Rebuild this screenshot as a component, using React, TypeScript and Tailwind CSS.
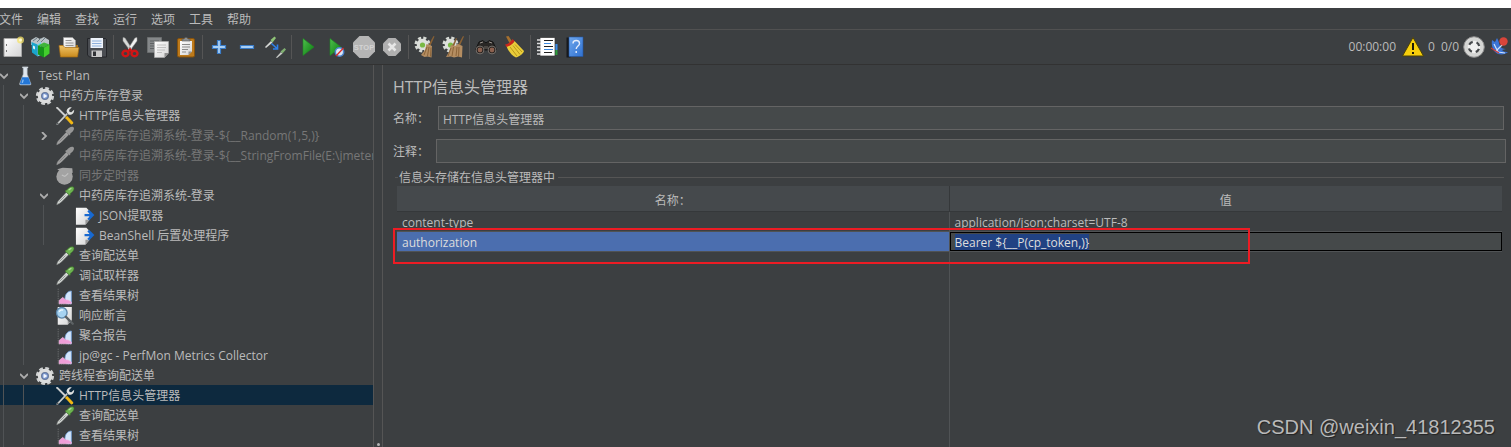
import { useEffect, useRef } from "react";
import type { ReactNode } from "react";

const menus = ["文件", "编辑", "查找", "运行", "选项", "工具", "帮助"];

function Svg({ children, size = "size-[22px]" }: { children: ReactNode; size?: string }) {
  return (
    <svg viewBox="0 0 22 22" className={`${size} shrink-0`} aria-hidden="true">
      {children}
    </svg>
  );
}

/* Gradients shared by all icons */
function IconDefs() {
  return (
    <svg className="absolute size-0" aria-hidden="true">
      <defs>
        <linearGradient id="paper" x1="0" y1="0" x2="1" y2="1">
          <stop offset="0" stopColor="#ffffff" />
          <stop offset="1" stopColor="#d4d4d4" />
        </linearGradient>
        <linearGradient id="folder" x1="0" y1="0" x2="0" y2="1">
          <stop offset="0" stopColor="#f0c468" />
          <stop offset="1" stopColor="#c98a1c" />
        </linearGradient>
        <linearGradient id="play" x1="0" y1="0" x2="1" y2="1">
          <stop offset="0" stopColor="#4fc04c" />
          <stop offset="1" stopColor="#0a7a10" />
        </linearGradient>
        <linearGradient id="blue" x1="0" y1="0" x2="1" y2="1">
          <stop offset="0" stopColor="#6fa8ee" />
          <stop offset="1" stopColor="#2f70cf" />
        </linearGradient>
        <radialGradient id="hub">
          <stop offset="0" stopColor="#d5e0f5" />
          <stop offset="1" stopColor="#4a6fb5" />
        </radialGradient>
      </defs>
    </svg>
  );
}

const NewIcon = () => (
  <Svg>
    <path d="M2 2.500h17.500v18H2z" fill="url(#paper)" stroke="#a5a5a5" />
    <path d="M4.500 8v2M4.500 14v2" stroke="#777" />
    <circle cx="18.500" cy="4" r="3.500" fill="#f5e36a" opacity=".75" />
    <circle cx="18.500" cy="4" r="1.500" fill="#fffbd0" />
  </Svg>
);

const TemplatesIcon = () => (
  <Svg>
    <path d="M1 4l5-3 4 2 4-2 5 3v5H1z" fill="#b9c2c6" />
    <path d="M3 5l4-3M7 6l4-4M11 6l4-4" stroke="#6b7c84" />
    <path d="M1.500 6l6 2.500v12l-5.500-4z" fill="#19a5cc" />
    <path d="M7.500 8.500L11 6v13l-3.500 1.500z" fill="#6bd4ec" />
    <path d="M3 9.500l2 1v3l-2-1z" fill="#d8f5fb" />
    <path d="M8 9.500l6 2v10l-6-3z" fill="#16961a" />
    <path d="M14 11.500l5.500-3v9L14 21.500z" fill="#43ce2d" />
    <path d="M8 9.500l6-3 5.500 2-5.500 3z" fill="#3fb53a" />
  </Svg>
);

const OpenIcon = () => (
  <Svg>
    <path d="M2 9h18v10H2z" fill="#a8731a" />
    <path d="M5.500 1.500h9l3 3V14h-12z" fill="url(#paper)" stroke="#999" strokeWidth=".7" />
    <path d="M7.500 4.500h6M7.500 7h8M7.500 9.500h8" stroke="#8a8a8a" strokeWidth=".9" />
    <path d="M1 9.500h4l2 2h14l-1.500 9.500H2.500z" fill="url(#folder)" stroke="#a56c12" strokeWidth=".7" />
  </Svg>
);

const SaveIcon = () => (
  <Svg>
    <path d="M1.500 2.500h18l1 1v17.500h-17l-2-2z" fill="#4a4d52" stroke="#24262a" />
    <path d="M4.500 2h12.500v10H4.500z" fill="#eef3fa" />
    <path d="M6 5h9.500M6 7.500h9.500M6 10h9.500" stroke="#8eb0dc" />
    <path d="M5.500 14.500h10.500v6.500H5.500z" fill="#c9c9c9" />
    <path d="M7 15.500h3v4.500H7z" fill="#303236" />
  </Svg>
);

const CutIcon = () => (
  <Svg>
    <path d="M4 1.500l2 .500 7 11-2 1.500L4 5z" fill="#d9dbd9" stroke="#999" strokeWidth=".5" />
    <path d="M18 1.500l-2 .500-7 11 2 1.500L18 5z" fill="#f1f2f1" stroke="#999" strokeWidth=".5" />
    <circle cx="11" cy="12" r=".8" fill="#555" />
    <g fill="none" stroke="#d01515" strokeWidth="2.400">
      <ellipse cx="6.500" cy="17.500" rx="3" ry="2.800" />
      <ellipse cx="15.500" cy="17.500" rx="3" ry="2.800" />
      <path d="M9 15.500l2-2 2 2" />
    </g>
  </Svg>
);

const CopyIcon = () => (
  <Svg>
    <path d="M.5 1.500h14v15H.5z" fill="#85888a" stroke="#6c6f70" />
    <path d="M3 5h9M3 7.500h4M3 10h4M3 12.500h4" stroke="#5f6264" />
    <path d="M7.500 5.500h14V17l-4 4.500h-10z" fill="url(#paper)" stroke="#aaa" strokeWidth=".7" />
    <path d="M10 9h9M10 11.500h9M10 14h8M10 16.500h5" stroke="#b5b5b5" strokeWidth=".8" />
    <path d="M21.500 17h-4v4.500z" fill="#8f8f8f" />
  </Svg>
);

const PasteIcon = () => (
  <Svg>
    <rect x="2.500" y="2.500" width="17" height="18.500" rx="1.500" fill="#bd7a1b" stroke="#86520d" />
    <path d="M5 5h12v10.500L13.500 19H5z" fill="url(#paper)" />
    <path d="M7 8.500h8M7 11h8M7 13.500h6M7 16h4" stroke="#8b8b8b" />
    <path d="M17 15.500h-3.500V19z" fill="#909090" />
    <path d="M7 5V3h2l1-1.500h2L13 3h2v2z" fill="#8d9192" stroke="#555" strokeWidth=".6" />
  </Svg>
);

const PlusIcon = () => (
  <Svg>
    <path d="M9.500 4.500h3v5h5v3h-5v5h-3v-5h-5v-3h5z" fill="#a9d0f5" stroke="#3a7cc8" strokeWidth="1.200" />
  </Svg>
);

const MinusIcon = () => (
  <Svg>
    <path d="M4.500 9.500h13v3h-13z" fill="#a9cff5" stroke="#3a7cc8" strokeWidth="1.200" />
  </Svg>
);

const ToggleIcon = () => (
  <Svg>
    <path d="M1 11l6-6 1.500 1.500L2 12z" fill="#d5d8d5" />
    <path d="M6.500 4l4-3.500 1.500 1.500-3.500 4.500z" fill="#8fc477" />
    <path d="M7.500 7.500l5.500 5M13.500 8.500V13H9" fill="none" stroke="#2f80e8" strokeWidth="1.600" />
    <path d="M12 21.500l5-5.500 1.500 1.500-5.500 4.500z" fill="#c5c8c5" />
    <path d="M16.500 15.500l4-3.500 1.500 1.500-3.500 4z" fill="#7fae70" />
  </Svg>
);

const PlayIcon = () => (
  <Svg>
    <path d="M6 2.500L17 11 6 19.500z" fill="url(#play)" stroke="#1c8a22" strokeWidth=".6" />
  </Svg>
);

const PlayNoTimersIcon = () => (
  <Svg>
    <path d="M5 2.500L16 11 5 19.500z" fill="url(#play)" stroke="#1c8a22" strokeWidth=".6" />
    <circle cx="14.500" cy="16" r="4.200" fill="#dce8f8" stroke="#4d84cc" strokeWidth="1.500" />
    <path d="M11 20l7.500-8" stroke="#e02a24" strokeWidth="1.300" />
  </Svg>
);

const StopIcon = () => (
  <Svg>
    <path d="M6.500 0h9L22 6.500v9L15.500 22h-9L0 15.500v-9z" fill="#b5b5b5" />
    <text x="11" y="14" textAnchor="middle" fontSize="7.500" fontWeight="700" fontFamily="Liberation Sans, sans-serif" fill="#d3d3d3">
      STOP
    </text>
  </Svg>
);

const ShutdownIcon = () => (
  <Svg>
    <path d="M7.500 2h7L20 7.500v7L14.500 20h-7L2 14.500v-7z" fill="#b0b0b0" />
    <path d="M7.500 7.500l7 7M14.500 7.500l-7 7" stroke="#e6e6e6" strokeWidth="2.600" />
  </Svg>
);

const Cog = () => (
  <>
    <circle cx="8.500" cy="8.500" r="6.500" fill="none" stroke="#d6dad5" strokeWidth="3" strokeDasharray="3 2.105" />
    <circle cx="8.500" cy="8.500" r="5.800" fill="#dde0dc" />
    <circle cx="8.500" cy="9" r="2.600" fill="#79b944" />
  </>
);

const ClearIcon = () => (
  <Svg>
    <Cog />
    <path d="M19.500 0l1 .5-4 9-2-.5z" fill="#8a6134" />
    <path d="M12.500 8l5.500 2-.5 11.500-4-1-3 .5-3.500-2 4-5z" fill="#b48d61" />
    <path d="M13 11l-3 8M15 11l-1.500 9M17 11.500l-.5 9" stroke="#80592f" strokeWidth=".8" />
  </Svg>
);

const ClearAllIcon = () => (
  <Svg>
    <Cog />
    <path d="M21 0l1 .5-4 9-2-.5zM14 2l1 .5-3 8-2-.5z" fill="#8a6134" />
    <path d="M9 9l4 1 3-2 4.500 2-.5 11.500-4-1-4 1-3-1-5 .5 3-5z" fill="#b48d61" />
    <path d="M9 12l-3 8M11.500 11l-1.500 9M15 11l-1 9M17 11l-.5 9.500" stroke="#80592f" strokeWidth=".8" />
  </Svg>
);

const SearchIcon = () => (
  <Svg>
    <path d="M4 6l4-1.500 2 2h2l2-2L18 6l3.500 8H.5z" fill="#292725" stroke="#151515" />
    <path d="M5 7l3-1M14 6l3 1" stroke="#9b958f" />
    <circle cx="5" cy="14" r="3.900" fill="#211d1b" stroke="#8d8680" strokeWidth=".8" />
    <circle cx="17" cy="14" r="3.900" fill="#211d1b" stroke="#8d8680" strokeWidth=".8" />
    <circle cx="5" cy="14" r="2.400" fill="#8d6250" />
    <circle cx="17" cy="14" r="2.400" fill="#8d6250" />
    <path d="M9 10h4v3H9z" fill="#4b4743" />
  </Svg>
);

const SweepIcon = () => (
  <Svg>
    <path d="M3 .5L5.500 0l4 6-2.500 2z" fill="#a6702e" />
    <path d="M3.500 10C7 9 10 7.500 11.500 5L21 15c-.5 2.500-4 5-8 6.500C9 20 5 15 3.500 10z" fill="#e9cd3a" />
    <path d="M7 11l7 9M10 9.500l7 9M12 8.500l7 7.500" stroke="#ad8a12" strokeWidth=".8" />
    <path d="M2 8.500C5 8 8 6 9.500 3l2 2C10 8 7 10 3.500 11z" fill="#c9281c" />
  </Svg>
);

const FunctionsIcon = () => (
  <Svg>
    <path d="M17 8h4.500v6H17z" fill="#3a8ae4" />
    <path d="M17 14h4.500v5H17z" fill="#2d9b3d" />
    <path d="M4 1.500h15V20H4z" fill="#fff" stroke="#333" strokeWidth=".7" />
    <path d="M1 4h4M1 7.500h4M1 11h4M1 14.500h4M1 18h4" stroke="#dedede" strokeWidth="1.400" />
    <path d="M8 4.500h9M8 10.500h9M8 16.500h8" stroke="#222" strokeWidth="1.200" />
    <path d="M8 7.500h7M8 13.500h9" stroke="#3b89e0" strokeWidth="1.200" />
  </Svg>
);

const HelpIcon = () => (
  <Svg>
    <path d="M2.500 1.500h4v20h-4z" fill="#17191c" />
    <path d="M5 1h14v19.500H5z" fill="url(#blue)" stroke="#2356a2" strokeWidth=".6" />
    <path d="M9 7.500c0-4 6.500-4 6.500 0 0 2.500-3.300 2.500-3.300 5.500M12.200 15v2" fill="none" stroke="#e4edfb" strokeWidth="1.400" />
  </Svg>
);

const WarningIcon = () => (
  <Svg>
    <path d="M11 1.500L21.500 20H.5z" fill="#f7cf0c" stroke="#4d4208" strokeLinejoin="round" />
    <path d="M11 7v7M11 16v2" stroke="#1d1a06" strokeWidth="2" />
  </Svg>
);

const RemoteIcon = () => (
  <Svg>
    <circle cx="11" cy="11" r="10.300" fill="#d5d6d4" stroke="#8e8e8e" />
    <circle cx="11" cy="11" r="6.200" fill="#f0f0ef" />
    <circle cx="11" cy="11" r="5.300" fill="none" stroke="#45484a" strokeWidth="2.200" strokeDasharray="4.330 4" strokeDashoffset="-2" />
  </Svg>
);

const FeatherIcon = () => (
  <Svg>
    <path d="M3 4c-1 6 1 12 6 14 4 1 8 0 10-2-4 0-5-1-6-2l4-1c-3 0-5-1-6-3C10 8 10 5 8 2L6 6z" fill="#3b74d6" />
    <path d="M5 8l4 8 7 1M7 15l7-7" stroke="#cfe0fa" strokeWidth="1.200" fill="none" />
    <path d="M2 12l8 5" stroke="#d13b30" strokeWidth="1.200" />
    <circle cx="14.500" cy="5.500" r="4.200" fill="#d9453a" />
  </Svg>
);

const FlaskIcon = () => (
  <Svg size="size-5">
    <path d="M9 1.500h4.500V9l4 10.500c.3 1-.5 1.500-1.500 1.500H6.500c-1 0-1.800-.5-1.500-1.500L9 9z" fill="#dfe6ee" stroke="#9aa3ac" strokeWidth=".6" />
    <path d="M7.800 12.500h7l2.200 6.500c.3 1-.5 1.300-1.500 1.300H7c-1 0-1.800-.3-1.500-1.300z" fill="#2377d8" />
    <path d="M8 1.500h6.500" stroke="#cfd6dc" strokeWidth="1.500" />
    <path d="M9 15l-1 3.500" stroke="#86bdf5" strokeWidth="1.500" />
  </Svg>
);

const GearIcon = () => (
  <Svg size="size-5">
    <circle cx="11" cy="11" r="8.300" fill="none" stroke="#cfd1d2" strokeWidth="3.400" strokeDasharray="4 2.519" />
    <circle cx="11" cy="11" r="8" fill="#dcdddd" />
    <circle cx="11" cy="11" r="4" fill="url(#hub)" stroke="#6d7b96" />
    <path d="M9.500 8.500l4 2.500-4 2.500z" fill="#f3f7ff" />
  </Svg>
);

const ToolsIcon = () => (
  <Svg size="size-5">
    <path d="M1 1.500l2-.5 9 9-1.500 1.500-9-9z" fill="#cfd1d1" />
    <path d="M11.500 12l2-1 6.500 7c.5 1.500-1 2.800-2.500 2l-6-6.500z" fill="#f2b714" />
    <path d="M2.500 20L13 9" stroke="#c9cbca" strokeWidth="1.800" strokeLinecap="round" />
    <path d="M18.500 1.500l-3 3 .5 2 2 .5 3-3c.5 4-3 6.500-6 5.500l-2-2.500c-1-3 2-6.500 5.500-5.500z" fill="#dfe1e0" />
    <circle cx="2.800" cy="19.300" r="1.200" fill="#55595b" />
  </Svg>
);

const DropperIcon = () => (
  <Svg size="size-5">
    <path d="M2 20.500c.5-3 1.500-4 3-5.500l7.500-8 2.500 2.500-8 8c-1.500 1.500-3 2-5 3z" fill="#d5d9d6" stroke="#868a88" strokeWidth=".7" />
    <path d="M5 17l6.500-6.500" stroke="#8c9290" />
    <path d="M11 5.500l2-1c2-3 5-4.500 7-3.500s.5 5-3 7l-.5 2.500z" fill="#6db351" stroke="#3d7a29" strokeWidth=".6" />
    <path d="M15 4.500l3-2" stroke="#b5df9f" strokeWidth="1.300" />
  </Svg>
);

const DropperOffIcon = () => (
  <Svg size="size-5">
    <path d="M2 20.500c.5-3 1.500-4 3-5.500l7.500-8 2.500 2.500-8 8c-1.500 1.500-3 2-5 3z" fill="#a2a2a2" stroke="#959595" strokeWidth=".7" />
    <path d="M11 5.500l2-1c2-3 5-4.500 7-3.500s.5 5-3 7l-.5 2.500z" fill="#979797" />
    <path d="M5 17l6.500-6.500" stroke="#828282" />
  </Svg>
);

const TimerOffIcon = () => (
  <Svg size="size-5">
    <circle cx="10.500" cy="11.500" r="9" fill="#a3a3a3" />
    <path d="M2.500 3.500l6-1.500 10.500.5.500 5-8 2z" fill="#a3a3a3" />
    <path d="M11 11.500L14.500 8M11 11.500L7.500 10" stroke="#c2c2c2" strokeWidth="1.200" />
  </Svg>
);

const ExtractorIcon = () => (
  <Svg size="size-5">
    <path d="M1 2h11.500l3.500 3.500V15l-4.500 5.500H1z" fill="url(#paper)" />
    <path d="M16 15h-4.500v5.500z" fill="#999" />
    <path d="M10.500 10h8M14.500 5l5 5-5 5" fill="none" stroke="#1769d2" strokeWidth="2.600" />
  </Svg>
);

const ChartIcon = () => (
  <Svg size="size-5">
    <path d="M3.500 3v17h15.500" fill="none" stroke="#6b6e70" strokeDasharray="1.500 1" />
    <path d="M11 14c0-5 3-8.500 7-8.500v14h-5z" fill="#d4e6fb" stroke="#6f9fdb" strokeWidth=".8" />
    <path d="M4.500 16l4-3.500 3 2.500 3 .5 3.500 2v2h-13.500z" fill="#ef9ed8" stroke="#f3bfe5" strokeWidth=".6" />
  </Svg>
);

const AssertionIcon = () => (
  <Svg size="size-5">
    <path d="M3 1h15.500v14.500L14 20.500H3z" fill="url(#paper)" />
    <path d="M18.500 15.500H14v5z" fill="#999" />
    <circle cx="7.500" cy="7.500" r="5.800" fill="#a7d3f1" stroke="#5d87ab" strokeWidth="1.500" />
    <path d="M4.500 6.500c1-2 3-2.500 4.500-2" stroke="#f0faff" strokeWidth="1.400" fill="none" />
    <path d="M12 12l7.500 7.500" stroke="#5c6164" strokeWidth="2.600" strokeLinecap="round" />
  </Svg>
);

type Tool = { label: string; icon: ReactNode; disabled?: boolean };

const toolGroups: Tool[][] = [
  [
    { label: "新建", icon: <NewIcon /> },
    { label: "模板", icon: <TemplatesIcon /> },
    { label: "打开", icon: <OpenIcon /> },
    { label: "保存", icon: <SaveIcon /> },
  ],
  [
    { label: "剪切", icon: <CutIcon /> },
    { label: "复制", icon: <CopyIcon /> },
    { label: "粘贴", icon: <PasteIcon /> },
  ],
  [
    { label: "展开", icon: <PlusIcon /> },
    { label: "折叠", icon: <MinusIcon /> },
    { label: "切换", icon: <ToggleIcon /> },
  ],
  [
    { label: "启动", icon: <PlayIcon /> },
    { label: "不停顿启动", icon: <PlayNoTimersIcon /> },
    { label: "停止", icon: <StopIcon />, disabled: true },
    { label: "关闭", icon: <ShutdownIcon />, disabled: true },
  ],
  [
    { label: "清除", icon: <ClearIcon /> },
    { label: "清除全部", icon: <ClearAllIcon /> },
  ],
  [
    { label: "查找", icon: <SearchIcon /> },
    { label: "重置查找", icon: <SweepIcon /> },
  ],
  [
    { label: "函数助手", icon: <FunctionsIcon /> },
    { label: "帮助", icon: <HelpIcon /> },
  ],
];

type Node = {
  depth: number;
  icon: ReactNode;
  text?: string;
  toggle?: "open" | "closed";
  disabled?: boolean;
  selected?: boolean;
};

const nodes: Node[] = [
  { depth: 0, icon: <FlaskIcon />, text: "Test Plan", toggle: "open" },
  { depth: 1, icon: <GearIcon />, text: "中药方库存登录", toggle: "open" },
  { depth: 2, icon: <ToolsIcon />, text: "HTTP信息头管理器" },
  { depth: 2, icon: <DropperOffIcon />, text: "中药房库存追溯系统-登录-${__Random(1,5,)}", toggle: "closed", disabled: true },
  { depth: 2, icon: <DropperOffIcon />, text: "中药房库存追溯系统-登录-${__StringFromFile(E:\\jmeter", disabled: true },
  { depth: 2, icon: <TimerOffIcon />, text: "同步定时器", disabled: true },
  { depth: 2, icon: <DropperIcon />, text: "中药房库存追溯系统-登录", toggle: "open" },
  { depth: 3, icon: <ExtractorIcon />, text: "JSON提取器" },
  { depth: 3, icon: <ExtractorIcon />, text: "BeanShell 后置处理程序" },
  { depth: 2, icon: <DropperIcon />, text: "查询配送单" },
  { depth: 2, icon: <DropperIcon />, text: "调试取样器" },
  { depth: 2, icon: <ChartIcon />, text: "查看结果树" },
  { depth: 2, icon: <AssertionIcon />, text: "响应断言" },
  { depth: 2, icon: <ChartIcon />, text: "聚合报告" },
  { depth: 2, icon: <ChartIcon />, text: "jp@gc - PerfMon Metrics Collector" },
  { depth: 1, icon: <GearIcon />, text: "跨线程查询配送单", toggle: "open" },
  { depth: 2, icon: <ToolsIcon />, text: "HTTP信息头管理器", selected: true },
  { depth: 2, icon: <DropperIcon />, text: "查询配送单" },
  { depth: 2, icon: <ChartIcon />, text: "查看结果树" },
  { depth: 1, icon: <GearIcon /> },
];

function TreeRow({ node }: { node: Node }) {
  return (
    <li
      className={`flex h-5 items-center whitespace-nowrap pt-0.5 ${node.selected ? "bg-[#0d293e]" : ""} ${
        node.disabled ? "text-[#777777]" : ""
      }`}
    >
      {Array.from({ length: node.depth }).map((_, i) => (
        <span key={i} className="-mt-0.5 h-5 w-5 shrink-0 pl-[3px]">
          <span className="block h-full w-px bg-[#505355]" />
        </span>
      ))}
      <span className="w-[15px] shrink-0">
        {node.toggle && (
          <svg viewBox="0 0 8 8" className="size-2" fill="none" stroke="#adadad" strokeWidth="1.800">
            {node.toggle === "open" ? <path d="M0 2l4 4 4-4" /> : <path d="M2 0l4 4-4 4" />}
          </svg>
        )}
      </span>
      {node.icon}
      {node.text && <span className="pl-1">{node.text}</span>}
    </li>
  );
}

function Toolbar() {
  return (
    <div className="flex h-[35px] shrink-0 items-center border-b border-[#323232]">
      <div className="-ml-px flex items-center">
        {toolGroups.map((group, i) => (
          <div key={i} className="flex items-center">
            {i > 0 && <span className="mx-0.5 h-6 w-px bg-[#555555]" />}
            {group.map((tool) => (
              <button
                key={tool.label}
                aria-label={tool.label}
                disabled={tool.disabled}
                className="flex h-7 w-7 items-center justify-center"
              >
                {tool.icon}
              </button>
            ))}
          </div>
        ))}
      </div>
      <div className="ml-auto flex items-center">
        <span>00:00:00</span>
        <button aria-label="日志" className="ml-1.5 flex items-center gap-1">
          <WarningIcon />
          <span>0</span>
        </button>
        <span className="ml-1.5 mr-1">0/0</span>
        <RemoteIcon />
        <span className="pl-1">
          <FeatherIcon />
        </span>
      </div>
    </div>
  );
}

function HeaderTable() {
  const editor = useRef<HTMLInputElement>(null);

  useEffect(() => {
    const el = editor.current;
    if (!el) return;
    el.focus();
    el.setSelectionRange(0, el.value.length, "backward");
  }, []);

  return (
    <div className="relative ml-1 mr-[3px] min-h-0 flex-1">
      <table className="h-full w-full table-fixed border-separate border-spacing-0 text-left">
        <thead>
          <tr className="h-[26px] bg-[#45494c] text-center">
            <th className="h-[26px] border-b border-r border-[#35383a] p-0 pt-1 font-normal">名称：</th>
            <th className="h-[26px] border-b border-[#35383a] p-0 pt-1 font-normal">值</th>
          </tr>
        </thead>
        <tbody>
          <tr className="h-5">
            <td className="h-5 border-b border-r border-[#505355] p-0 pl-[5px] pt-0.5">content-type</td>
            <td className="h-5 border-b border-[#505355] p-0 pl-[5px] pt-0.5">application/json;charset=UTF-8</td>
          </tr>
          <tr className="h-5">
            <td className="h-5 border-b border-r border-[#505355] bg-[#4b6eaf] p-0 pl-[5px] pt-0.5 text-[#dddddd]">
              authorization
            </td>
            <td className="h-5 border-b border-[#505355] p-0">
              <input
                ref={editor}
                aria-label="值"
                defaultValue="Bearer ${__P(cp_token,)}"
                className="block h-[19px] w-full border border-black bg-[#45494a] px-1 pt-px leading-4 outline-none selection:bg-[#214283] selection:text-[#dddddd]"
              />
            </td>
          </tr>
          <tr>
            <td className="border-r border-[#505355] p-0" />
            <td className="p-0" />
          </tr>
        </tbody>
      </table>
      {/* highlight frame over the edited row */}
      <div className="pointer-events-none absolute -left-1 top-[42px] h-9 w-[77.600%] border-2 border-[#ed1c24]" />
    </div>
  );
}

export default function App() {
  return (
    <div className="relative flex h-screen flex-col overflow-hidden bg-[#3c3f41] font-['Open_Sans','Noto_Sans_CJK_SC',sans-serif] text-[12px] leading-4 text-[#bbbbbb]">
      <IconDefs />
      <div className="h-2 shrink-0 bg-white" />
      <nav className="-ml-px flex h-[22px] shrink-0 items-center gap-3.5 border-b border-[#515151] pt-0.5">
        {menus.map((menu) => (
          <button key={menu}>{menu}</button>
        ))}
      </nav>
      <Toolbar />

      <div className="flex min-h-0 flex-1">
        <aside className="w-[374px] shrink-0 overflow-hidden border-r border-[#555555]">
          <ul>
            {nodes.map((node, i) => (
              <TreeRow key={i} node={node} />
            ))}
          </ul>
        </aside>
        <div className="flex w-[9px] shrink-0 items-end justify-center border-r border-[#555555] pb-px">
          <span className="size-[3px] rounded-full bg-[#b5b5b5]" />
        </div>

        <main className="flex min-w-0 flex-1 flex-col pl-2.5 pr-1.5 pt-3">
          <h1 className="h-5 text-base leading-5">HTTP信息头管理器</h1>
          <div className="mt-[9px] flex items-center pr-px">
            <label htmlFor="name" className="w-[45px] shrink-0 pt-0.5">
              名称：
            </label>
            <input
              id="name"
              defaultValue="HTTP信息头管理器"
              className="h-6 min-w-0 flex-1 border border-[#646464] bg-[#45494a] px-1 pt-0.5 outline-none"
            />
          </div>
          <div className="-mr-px mt-[9px] flex items-center">
            <label htmlFor="comment" className="w-[43px] shrink-0 pt-0.5">
              注释：
            </label>
            <input
              id="comment"
              className="h-6 min-w-0 flex-1 border border-[#646464] bg-[#45494a] px-1 pt-0.5 outline-none"
            />
          </div>
          <div className="mt-[5px] flex h-[18px] shrink-0 items-center pl-0.5 pr-px">
            <span className="mr-px h-px w-[3px] bg-[#555555]" />
            <span className="pr-[3px] pt-0.5">信息头存储在信息头管理器中</span>
            <span className="h-px flex-1 bg-[#555555]" />
          </div>
          <HeaderTable />
        </main>
      </div>

      <div className="pointer-events-none absolute bottom-2 right-4 font-['Liberation_Sans',sans-serif] text-[20px] leading-6 text-[#b9b9b9] [text-shadow:1px_1px_1px_#222]">
        CSDN @weixin_41812355
      </div>
    </div>
  );
}
